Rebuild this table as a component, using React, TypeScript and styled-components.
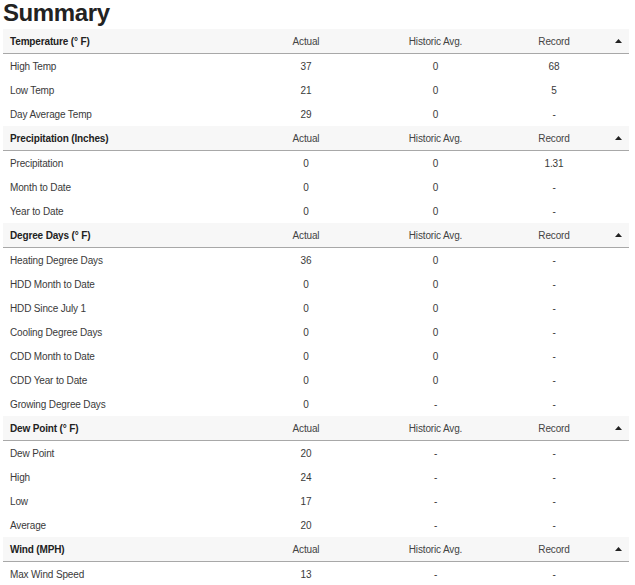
import React from "react";
import styled, { createGlobalStyle } from "styled-components";

const Global = createGlobalStyle`
  html, body { margin: 0; padding: 0; background: #fff; }
  body { font-family: "Liberation Sans", Arial, sans-serif; }
`;

const Page = styled.div`
  width: 626px;
  padding-left: 3px;
`;

const Title = styled.h1`
  margin: 0 0 3px 0;
  font-size: 24px;
  line-height: 26px;
  font-weight: 700;
  letter-spacing: -0.4px;
  color: #222;
`;

const Row = styled.div<{ $head?: boolean }>`
  display: grid;
  grid-template-columns: 238px 130px 129px 108px 1fr;
  align-items: center;
  height: 24px;
  font-size: 10px;
  letter-spacing: -0.15px;
  color: ${(p) => (p.$head ? "#444" : "#3a3a3a")};
  background: ${(p) => (p.$head ? "#f7f7f7" : "#fff")};
  border-bottom: ${(p) => (p.$head ? "1px solid #a8a8a8" : "none")};
`;

const Label = styled.div<{ $head?: boolean }>`
  padding-left: 7px;
  font-weight: ${(p) => (p.$head ? 700 : 400)};
  color: ${(p) => (p.$head ? "#222" : "inherit")};
`;

const Cell = styled.div`
  text-align: center;
`;

const Caret = styled.div`
  display: flex;
  justify-content: center;
  align-items: center;
`;

type Group = { title: string; rows: [string, string, string, string][] };

const groups: Group[] = [
  {
    title: "Temperature (° F)",
    rows: [
      ["High Temp", "37", "0", "68"],
      ["Low Temp", "21", "0", "5"],
      ["Day Average Temp", "29", "0", "-"],
    ],
  },
  {
    title: "Precipitation (Inches)",
    rows: [
      ["Precipitation", "0", "0", "1.31"],
      ["Month to Date", "0", "0", "-"],
      ["Year to Date", "0", "0", "-"],
    ],
  },
  {
    title: "Degree Days (° F)",
    rows: [
      ["Heating Degree Days", "36", "0", "-"],
      ["HDD Month to Date", "0", "0", "-"],
      ["HDD Since July 1", "0", "0", "-"],
      ["Cooling Degree Days", "0", "0", "-"],
      ["CDD Month to Date", "0", "0", "-"],
      ["CDD Year to Date", "0", "0", "-"],
      ["Growing Degree Days", "0", "-", "-"],
    ],
  },
  {
    title: "Dew Point (° F)",
    rows: [
      ["Dew Point", "20", "-", "-"],
      ["High", "24", "-", "-"],
      ["Low", "17", "-", "-"],
      ["Average", "20", "-", "-"],
    ],
  },
  {
    title: "Wind (MPH)",
    rows: [["Max Wind Speed", "13", "-", "-"]],
  },
];

export default function App() {
  return (
    <Page>
      <Global />
      <Title>Summary</Title>
      {groups.map((g) => (
        <section key={g.title}>
          <Row $head>
            <Label $head>{g.title}</Label>
            <Cell>Actual</Cell>
            <Cell>Historic Avg.</Cell>
            <Cell>Record</Cell>
            <Caret>
              <svg width="7" height="4" viewBox="0 0 7 4">
                <path d="M0 4 L3.5 0 L7 4 Z" fill="#222" />
              </svg>
            </Caret>
          </Row>
          {g.rows.map((r) => (
            <Row key={r[0]}>
              <Label>{r[0]}</Label>
              <Cell>{r[1]}</Cell>
              <Cell>{r[2]}</Cell>
              <Cell>{r[3]}</Cell>
              <div />
            </Row>
          ))}
        </section>
      ))}
    </Page>
  );
}
